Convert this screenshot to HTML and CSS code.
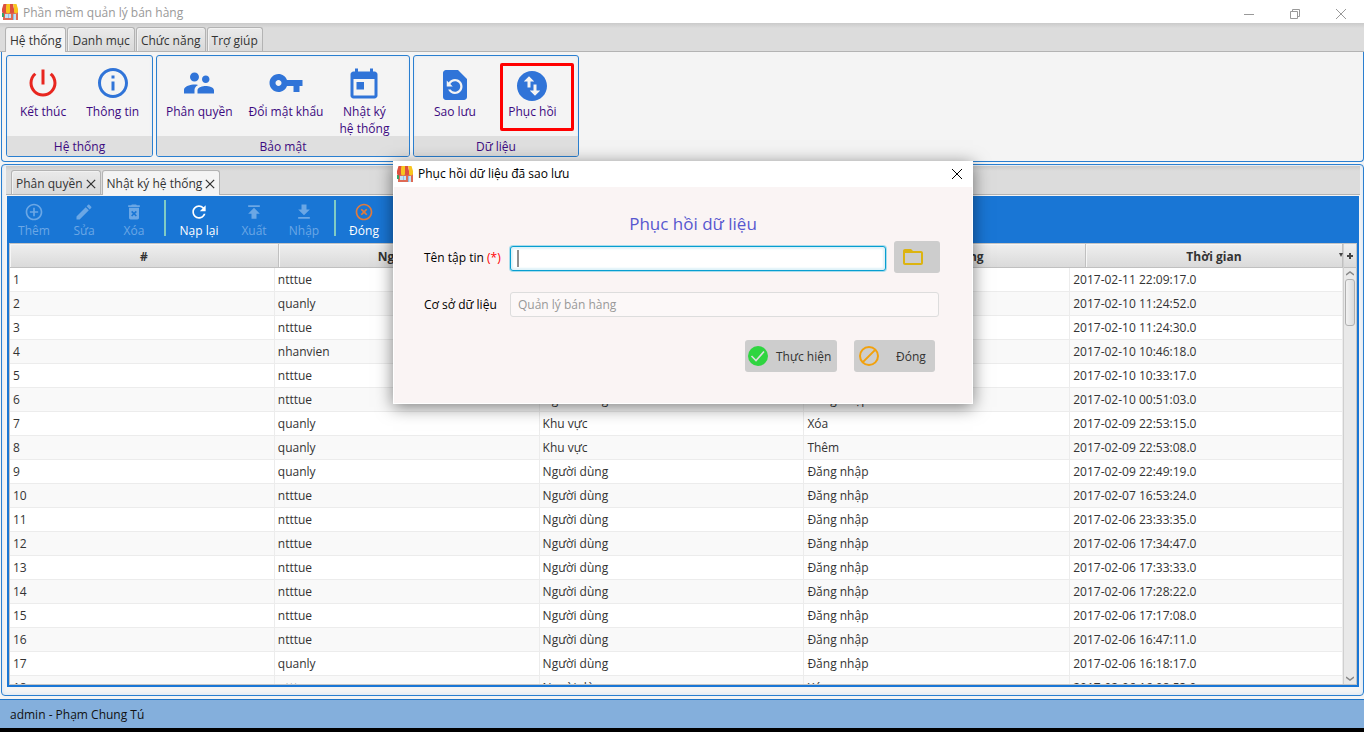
FILE: index.html
```html
<!DOCTYPE html>
<html lang="vi">
<head>
<meta charset="utf-8">
<title>Phần mềm quản lý bán hàng</title>
<link rel="stylesheet" href="styles.css">
</head>
<body>
<svg class="sprite" aria-hidden="true">
  <symbol id="shop" viewBox="0 0 16 16">
    <path fill="#de6a55" d="M1 7h15v9H1z"/>
    <path fill="#2fa56b" d="M0 9h2v4H0z"/>
    <path fill="#c3e2f5" d="M3 10h6v4H3zM11 10h3v6h-3z"/>
    <path fill="#8fc0e6" d="M6 10h1v4H6zM11 10h1v6h-1z"/>
    <path fill="#dc4f3f" d="M1.500 0H5l-1 7.500a2 2 0 0 1-4 0V5zM8 0h3l1 5v2.500a2 2 0 0 1-4 0z"/>
    <path fill="#f8c51e" d="M4.500 0H8v7.500a2 2 0 0 1-4 0V4zM11 0h3.500L16 5v2.500a2 2 0 0 1-4 0V4z"/>
  </symbol>
  <symbol id="close" viewBox="0 0 12 12"><path fill="none" stroke="currentColor" d="M1 1l10 10M11 1L1 11"/></symbol>
</svg>
<div class="app">
  <header class="titlebar">
    <svg class="shop"><use href="#shop"/></svg>
    <h1>Phần mềm quản lý bán hàng</h1>
    <div class="winctl">
      <button aria-label="Thu nhỏ"><svg viewBox="0 0 12 12"><path fill="none" stroke="currentColor" d="M1 6.500h10"/></svg></button>
      <button aria-label="Khôi phục"><svg viewBox="0 0 12 12"><path fill="none" stroke="currentColor" d="M1.500 3.500h7v7h-7zM3.500 3.500v-2h7v7h-2"/></svg></button>
      <button aria-label="Đóng cửa sổ"><svg viewBox="0 0 12 12"><use href="#close"/></svg></button>
    </div>
  </header>

  <nav class="tabs menu">
    <button class="tab active">Hệ thống</button>
    <button class="tab">Danh mục</button>
    <button class="tab">Chức năng</button>
    <button class="tab">Trợ giúp</button>
  </nav>

  <section class="ribbon">
    <div class="group g1">
      <div class="tools">
        <button class="tool"><svg class="red" viewBox="0 0 24 24"><path fill="currentColor" d="M13 3h-2v10h2V3zm4.830 2.170l-1.420 1.420C17.990 7.860 19 9.810 19 12c0 3.870-3.130 7-7 7s-7-3.130-7-7c0-2.190 1.010-4.140 2.580-5.420L6.170 5.170C4.230 6.820 3 9.260 3 12c0 4.970 4.030 9 9 9s9-4.030 9-9c0-2.740-1.230-5.180-3.170-6.830z"/></svg>Kết thúc</button>
        <button class="tool"><svg viewBox="0 0 24 24"><path fill="currentColor" d="M11 17h2v-6h-2v6zm1-15C6.480 2 2 6.480 2 12s4.480 10 10 10 10-4.480 10-10S17.520 2 12 2zm0 18c-4.410 0-8-3.590-8-8s3.590-8 8-8 8 3.590 8 8-3.590 8-8 8zM11 9h2V7h-2v2z"/></svg>Thông tin</button>
      </div>
      <h2>Hệ thống</h2>
    </div>
    <div class="group g2">
      <div class="tools">
        <button class="tool"><svg viewBox="0 0 24 24"><path fill="currentColor" d="M16.500 12c1.380 0 2.490-1.120 2.490-2.500S17.880 7 16.500 7C15.120 7 14 8.120 14 9.500s1.120 2.500 2.500 2.500zM9 11c1.660 0 2.990-1.340 2.990-3S10.660 5 9 5C7.340 5 6 6.340 6 8s1.340 3 3 3zm7.500 3c-1.830 0-5.500.920-5.500 2.750V19h11v-2.250c0-1.830-3.670-2.750-5.500-2.750zM9 13c-2.330 0-7 1.170-7 3.500V19h7v-2.250c0-.850.330-2.340 2.370-3.470C10.500 13.100 9.660 13 9 13z"/></svg>Phân quyền</button>
        <button class="tool"><svg viewBox="0 0 24 24"><path fill="currentColor" d="M12.650 10C11.830 7.670 9.610 6 7 6c-3.310 0-6 2.690-6 6s2.690 6 6 6c2.610 0 4.830-1.670 5.650-4H17v4h4v-4h2v-4H12.650zM7 14c-1.100 0-2-.9-2-2s.9-2 2-2 2 .9 2 2-.9 2-2 2z"/></svg>Đổi mật khẩu</button>
        <button class="tool low"><svg viewBox="0 0 24 24"><path fill="currentColor" d="M19 3h-1V1h-2v2H8V1H6v2H5c-1.110 0-1.990.9-1.990 2L3 19c0 1.100.890 2 2 2h14c1.100 0 2-.9 2-2V5c0-1.100-.9-2-2-2zm0 16H5V8h14v11zM7 10h5v5H7z"/></svg>Nhật ký<br>hệ thống</button>
      </div>
      <h2>Bảo mật</h2>
    </div>
    <div class="group g3">
      <div class="tools">
        <button class="tool low"><svg viewBox="0 0 24 24"><path fill="currentColor" d="M14 2H6c-1.100 0-1.990.9-1.990 2L4 20c0 1.100.890 2 1.990 2H18c1.100 0 2-.9 2-2V8l-6-6zm-2 16c-2.050 0-3.810-1.240-4.580-3h1.710c.630.9 1.680 1.500 2.870 1.500 1.930 0 3.500-1.570 3.500-3.500S13.930 9.500 12 9.500c-1.350 0-2.520.780-3.100 1.900l1.600 1.600h-4V9l1.300 1.300C8.690 8.920 10.230 8 12 8c2.760 0 5 2.240 5 5s-2.240 5-5 5z"/></svg>Sao lưu</button>
        <button class="tool marked"><svg viewBox="0 0 24 24"><path fill="currentColor" d="M12 2C6.480 2 2 6.480 2 12s4.480 10 10 10 10-4.480 10-10S17.520 2 12 2zM6.500 9L10 5.500 13.500 9H11v4H9V9H6.500zm11 6L14 18.500 10.500 15H13v-4h2v4h2.500z"/></svg>Phục hồi</button>
      </div>
      <h2>Dữ liệu</h2>
    </div>
  </section>

  <main class="workspace">
    <div class="tabs docs">
      <div class="tab">Phân quyền <button aria-label="Đóng Phân quyền"><svg><use href="#close"/></svg></button></div>
      <div class="tab active">Nhật ký hệ thống <button aria-label="Đóng Nhật ký hệ thống"><svg><use href="#close"/></svg></button></div>
    </div>
    <div class="panel">
      <div class="toolbar">
        <div class="acts">
          <button class="act" disabled><svg viewBox="0 0 24 24"><path fill="currentColor" d="M13 7h-2v4H7v2h4v4h2v-4h4v-2h-4V7zm-1-5C6.480 2 2 6.480 2 12s4.480 10 10 10 10-4.480 10-10S17.520 2 12 2zm0 18c-4.410 0-8-3.590-8-8s3.590-8 8-8 8 3.590 8 8-3.590 8-8 8z"/></svg>Thêm</button>
          <button class="act" disabled><svg viewBox="0 0 24 24"><path fill="currentColor" d="M3 17.250V21h3.750L17.810 9.940l-3.750-3.750L3 17.250zM20.710 7.040c.390-.390.390-1.020 0-1.410l-2.340-2.340c-.390-.390-1.020-.390-1.410 0l-1.830 1.830 3.750 3.750 1.830-1.830z"/></svg>Sửa</button>
          <button class="act" disabled><svg viewBox="0 0 24 24"><path fill="currentColor" fill-rule="evenodd" d="M6 7v12c0 1.100.9 2 2 2h8c1.100 0 2-.9 2-2V7zM15.500 4l-1-1h-5l-1 1H5v2h14V4zM8.500 11.900l1.400-1.400 2.100 2.100 2.100-2.100 1.400 1.400-2.100 2.100 2.100 2.100-1.400 1.400-2.100-2.100-2.100 2.100-1.400-1.400 2.100-2.100z"/></svg>Xóa</button>
        </div>
        <div class="acts">
          <button class="act wide"><svg viewBox="0 0 24 24"><path fill="currentColor" d="M17.650 6.350C16.200 4.900 14.210 4 12 4c-4.420 0-7.990 3.580-7.990 8s3.570 8 7.990 8c3.730 0 6.840-2.550 7.730-6h-2.080c-.820 2.330-3.040 4-5.650 4-3.310 0-6-2.690-6-6s2.690-6 6-6c1.660 0 3.140.690 4.220 1.780L13 11h7V4l-2.350 2.350z"/></svg>Nạp lại</button>
          <button class="act" disabled><svg viewBox="0 0 24 24"><path fill="currentColor" d="M5 4v2h14V4H5zm0 10h4v6h6v-6h4l-7-7-7 7z"/></svg>Xuất</button>
          <button class="act" disabled><svg viewBox="0 0 24 24"><path fill="currentColor" d="M19 9h-4V3H9v6H5l7 7 7-7zM5 18v2h14v-2H5z"/></svg>Nhập</button>
        </div>
        <div class="acts">
          <button class="act"><svg class="orange" viewBox="0 0 24 24"><path fill="currentColor" d="M14.590 8L12 10.590 9.410 8 8 9.410 10.590 12 8 14.590 9.410 16 12 13.410 14.590 16 16 14.590 13.410 12 16 9.410 14.590 8zM12 2C6.470 2 2 6.470 2 12s4.470 10 10 10 10-4.470 10-10S17.530 2 12 2zm0 18c-4.410 0-8-3.590-8-8s3.590-8 8-8 8 3.590 8 8-3.590 8-8 8z"/></svg>Đóng</button>
        </div>
      </div>
      <div class="grid">
        <table>
          <thead><tr><th>#</th><th>Người dùng</th><th>Chức năng</th><th>Hành động</th><th>Thời gian<svg class="sort" viewBox="0 0 4 4"><path fill="#444" d="M0 0h4L2 4z"/></svg></th></tr></thead>
          <tbody>
            <tr><td>1</td><td>ntttue</td><td>Người dùng</td><td>Đăng nhập</td><td>2017-02-11 22:09:17.0</td></tr>
            <tr><td>2</td><td>quanly</td><td>Người dùng</td><td>Đăng nhập</td><td>2017-02-10 11:24:52.0</td></tr>
            <tr><td>3</td><td>ntttue</td><td>Người dùng</td><td>Đăng nhập</td><td>2017-02-10 11:24:30.0</td></tr>
            <tr><td>4</td><td>nhanvien</td><td>Người dùng</td><td>Đăng nhập</td><td>2017-02-10 10:46:18.0</td></tr>
            <tr><td>5</td><td>ntttue</td><td>Người dùng</td><td>Đăng nhập</td><td>2017-02-10 10:33:17.0</td></tr>
            <tr><td>6</td><td>ntttue</td><td>Người dùng</td><td>Đăng nhập</td><td>2017-02-10 00:51:03.0</td></tr>
            <tr><td>7</td><td>quanly</td><td>Khu vực</td><td>Xóa</td><td>2017-02-09 22:53:15.0</td></tr>
            <tr><td>8</td><td>quanly</td><td>Khu vực</td><td>Thêm</td><td>2017-02-09 22:53:08.0</td></tr>
            <tr><td>9</td><td>quanly</td><td>Người dùng</td><td>Đăng nhập</td><td>2017-02-09 22:49:19.0</td></tr>
            <tr><td>10</td><td>ntttue</td><td>Người dùng</td><td>Đăng nhập</td><td>2017-02-07 16:53:24.0</td></tr>
            <tr><td>11</td><td>ntttue</td><td>Người dùng</td><td>Đăng nhập</td><td>2017-02-06 23:33:35.0</td></tr>
            <tr><td>12</td><td>ntttue</td><td>Người dùng</td><td>Đăng nhập</td><td>2017-02-06 17:34:47.0</td></tr>
            <tr><td>13</td><td>ntttue</td><td>Người dùng</td><td>Đăng nhập</td><td>2017-02-06 17:33:33.0</td></tr>
            <tr><td>14</td><td>ntttue</td><td>Người dùng</td><td>Đăng nhập</td><td>2017-02-06 17:28:22.0</td></tr>
            <tr><td>15</td><td>ntttue</td><td>Người dùng</td><td>Đăng nhập</td><td>2017-02-06 17:17:08.0</td></tr>
            <tr><td>16</td><td>ntttue</td><td>Người dùng</td><td>Đăng nhập</td><td>2017-02-06 16:47:11.0</td></tr>
            <tr><td>17</td><td>quanly</td><td>Người dùng</td><td>Đăng nhập</td><td>2017-02-06 16:18:17.0</td></tr>
            <tr><td>18</td><td>ntttue</td><td>Người dùng</td><td>Xóa</td><td>2017-02-06 16:08:53.0</td></tr>
          </tbody>
        </table>
        <div class="scroll">
          <button class="plus" aria-label="Chọn cột"><svg viewBox="0 0 8 8"><path fill="#444" d="M3 1h2v2h2v2H5v2H3V5H1V3h2z"/></svg></button>
          <button class="arrow" aria-label="Cuộn lên"><svg viewBox="0 0 8 6"><path fill="none" stroke="#888" stroke-width="1.500" d="M0 5l4-3 4 3"/></svg></button>
          <div class="thumb"></div>
          <button class="arrow" aria-label="Cuộn xuống"><svg viewBox="0 0 8 6"><path fill="none" stroke="#888" stroke-width="1.500" d="M0 1l4 3 4-3"/></svg></button>
        </div>
      </div>
    </div>
  </main>
  <footer class="status">admin - Phạm Chung Tú</footer>
</div>

<div class="dialog" role="dialog" aria-labelledby="dlg-title">
  <div class="dlg-bar">
    <svg class="shop"><use href="#shop"/></svg>
    <span id="dlg-title">Phục hồi dữ liệu đã sao lưu</span>
    <button aria-label="Đóng hộp thoại"><svg><use href="#close"/></svg></button>
  </div>
  <form class="dlg-body">
    <h2>Phục hồi dữ liệu</h2>
    <div class="field">
      <label for="file">Tên tập tin <b>(*)</b></label>
      <div class="focus"><span class="caret"></span><input id="file" type="text"></div>
      <button type="button" class="btn folder" aria-label="Chọn tập tin"><svg viewBox="0 0 24 24"><path fill="#dcb411" d="M20 6h-8l-2-2H4c-1.100 0-1.990.9-1.990 2L2 18c0 1.100.9 2 2 2h16c1.100 0 2-.9 2-2V8c0-1.100-.9-2-2-2zm0 12H4V8h16v10z"/></svg></button>
    </div>
    <div class="field">
      <label for="db">Cơ sở dữ liệu</label>
      <input id="db" type="text" value="Quản lý bán hàng" disabled>
    </div>
    <div class="buttons">
      <button type="button" class="btn run"><svg viewBox="0 0 24 24"><circle cx="12" cy="12" r="10" fill="#2fd540"/><path fill="none" stroke="#ddd" stroke-width="1.600" d="M5.500 12l4.500 4.500 8-9"/></svg><span>Thực hiện</span></button>
      <button type="button" class="btn stop"><svg viewBox="0 0 24 24"><path fill="none" stroke="#f2a10c" stroke-width="2" d="M18.400 5.600L5.600 18.400M21 12a9 9 0 1 1-18 0 9 9 0 0 1 18 0z"/></svg><span>Đóng</span></button>
    </div>
  </form>
</div>
</body>
</html>
```
FILE: styles.css
```css
* { box-sizing: border-box; }
html, body { height: 100%; }
body {
  margin: 0;
  overflow: hidden;
  font: 12px/16px "Open Sans", "Noto Sans", sans-serif;
  color: #333;
  background: #000;
}
button { font: inherit; color: inherit; margin: 0; padding: 0; border: 0; background: none; }
h1, h2 { margin: 0; font: inherit; }
.sprite { position: absolute; width: 0; height: 0; }
.shop { width: 16px; height: 16px; flex: none; }

.app { height: 100%; display: flex; flex-direction: column; background: #f4f4f4; border-bottom: 4px solid #000; }

.titlebar { display: flex; align-items: center; gap: 5px; height: 23px; padding-left: 2px; background: #fff; color: #999; flex: none; }
.titlebar h1 { padding-top: 2px; }
.winctl { margin-left: auto; display: flex; padding-top: 4px; }
.winctl button { width: 46px; height: 18px; display: grid; place-items: center; }
.winctl svg { width: 12px; height: 12px; }

.tabs { display: flex; align-items: flex-end; height: 29px; flex: none; background: linear-gradient(#cacaca, #dcdcdc 5px); border-bottom: 1px solid #b3b3b3; }
.menu { padding-left: 5px; gap: 1px; }
.tab { height: 24px; padding: 2px 4px 0; display: flex; align-items: center; gap: 3px; border: 1px solid #b3b3b3; border-bottom: 0; border-radius: 3px 3px 0 0; background: linear-gradient(#eaeaea, #d9d9d9); box-shadow: inset 1px 1px #f2f2f2; white-space: nowrap; }
.tab.active { background: #f4f4f4; margin-bottom: -1px; height: 25px; }
.tab button { width: 10px; height: 10px; display: flex; }
.tab svg { width: 10px; height: 10px; stroke-width: 1.5; }

.ribbon { display: flex; gap: 3px; height: 110px; flex: none; margin: 0 0 0 1px; padding: 3px 4px 4px; border: 1px solid #2a7fd0; border-top: 0; border-radius: 0 0 4px 4px; }
.group { display: flex; flex-direction: column; border: 1px solid #2a7fd0; border-radius: 3px; color: #3c0a80; overflow: hidden; box-shadow: inset 0 0 3px #dbe6f2; }
.g1 { width: 147px; }
.g2 { width: 254px; }
.g3 { width: 166px; }
.group h2 { height: 20px; line-height: 22px; background: #dfdfdf; text-align: center; }
.tools { flex: 1; min-height: 0; display: flex; align-items: flex-start; padding-top: 9px; }
.g1 .tools { gap: 20px; padding-left: 13px; }
.g2 .tools { gap: 16px; padding-left: 9px; }
.g3 .tools { gap: 24px; padding-left: 20px; }
.tool { display: flex; flex-direction: column; align-items: center; line-height: 17px; white-space: nowrap; }
.tool svg { width: 36px; height: 36px; margin-bottom: 2px; color: #3074d8; }
.tool svg.red { color: #e8261f; }
.low svg { margin-top: 2px; margin-bottom: 0; }
.marked { width: 74px; height: 68px; margin-top: -2px; padding: 2px 9px 0 0; border: 3px solid #f00; border-radius: 2px; }
.marked svg { margin-bottom: -1px; }

.workspace { flex: 1; min-height: 0; display: flex; flex-direction: column; margin: 2px 0 3px 1px; padding: 1px 3px 8px 4px; border: 1px solid #2a7fd0; border-radius: 4px; box-shadow: inset 0 0 4px #cfe0f2; }
.docs { padding-left: 5px; gap: 1px; }
.panel { flex: 1; min-height: 0; display: flex; flex-direction: column; margin: 0 1px; padding: 0 2px 2px; background: #1976d5; border-top: 1px solid #f4f4f4; }
.toolbar { height: 47px; display: flex; flex: none; padding: 4px 0 7px; }
.acts { display: flex; padding-right: 5px; }
.acts + .acts { padding-left: 8px; border-left: 2px solid #80cbc4; }
.acts:last-child { padding-left: 3px; }
.act { width: 50px; display: flex; flex-direction: column; align-items: center; color: #fff; padding-top: 2px; }
.act.wide { width: 55px; padding-right: 5px; }
.act:disabled { color: #6ba7e5; }
.act svg { width: 20px; height: 20px; margin-bottom: 1px; flex: none; }
.act .orange { color: #e07b3c; }

.grid { flex: 1; min-height: 0; display: flex; overflow: hidden; border: 1px solid #c4c4c4; background: #fff; }
table { flex: 1; min-width: 0; display: block; }
thead, tbody { display: block; }
tr { display: grid; }
thead tr { grid-template-columns: 269fr 269fr 269fr 269fr 257fr; height: 24px; }
th { position: relative; line-height: 25px; height: 24px; padding: 0; background: linear-gradient(#efefef, #dadada); border-right: 1px solid #c0c0c0; border-bottom: 1px solid #c0c0c0; box-shadow: inset 1px 1px #f6f6f6; font-weight: bold; }
.sort { position: absolute; right: -1px; top: 9px; width: 4px; height: 4px; }
tbody tr { grid-template-columns: 265fr 265fr 265fr 266fr 273fr; height: 24px; background: #fff; }
tbody tr:nth-child(even) { background: #f9f9f9; }
td { padding: 0 3px; line-height: 23px; border-right: 1px solid #ececec; border-bottom: 1px solid #ececec; }
.scroll { width: 13px; flex: none; display: flex; flex-direction: column; background: #e9e9e9; border-left: 1px solid #cfcfcf; }
.plus { height: 24px; background: linear-gradient(#efefef, #dadada); border-bottom: 1px solid #c0c0c0; display: grid; place-items: center; }
.plus svg { width: 8px; height: 8px; }
.arrow { height: 10px; display: grid; place-items: center; }
.arrow svg { width: 8px; height: 6px; }
.thumb { height: 47px; margin: 1px 1px auto; border: 1px solid #b0b0b0; border-radius: 3px; background: linear-gradient(90deg, #f2f2f2, #dcdcdc); }

.status { height: 29px; flex: none; padding-left: 10px; line-height: 30px; border-top: 1px solid #1f75c8; background: #84afdc; color: #111; }

.dialog { position: absolute; left: calc(50% - 289px); top: 161px; width: 580px; background: #faf4f4; border: 1px solid #fff; box-shadow: 0 3px 16px rgba(0, 0, 0, .5); color: #000; }
.dlg-bar { display: flex; align-items: center; gap: 5px; height: 25px; padding: 0 9px 2px 3px; background: #fff; }
.dlg-bar button { margin-left: auto; display: flex; }
.dlg-bar button svg { width: 12px; height: 12px; }
.dlg-body { padding: 25px 33px 31px 30px; }
.dlg-body h2 { padding-left: 23px; text-align: center; font-size: 17px; line-height: 24px; color: #5757cf; }
.field { display: flex; align-items: center; height: 32px; margin-top: 5px; }
.field + .field { margin-top: 15px; }
.field label { width: 86px; flex: none; padding-top: 2px; }
.field b { color: #f00; font-weight: normal; }
.field input { flex: 1; min-width: 0; height: 25px; padding: 0 7px; font: inherit; border: 1px solid #ddd; border-radius: 3px; background: #fcf8f8; color: #999; outline: 0; }
.focus { flex: 1; display: flex; position: relative; padding-top: 2px; }
.field .focus input { border: 1px solid #079ed0; box-shadow: 0 0 0 1px #a9dcec, inset 0 0 2px 2px #dff2f8; background: #fff; color: #333; }
.caret { position: absolute; left: 7px; top: 6px; width: 2px; height: 17px; background: #909090; }
.btn { height: 32px; display: flex; align-items: center; background: #cdcdcd; border-radius: 3px; color: #333; }
.btn svg { width: 24px; height: 24px; flex: none; }
.btn span { padding-top: 2px; }
.folder { width: 46px; margin: 0 -1px 0 8px; padding-left: 7px; }
.buttons { display: flex; justify-content: flex-end; gap: 17px; margin: 20px 4px 0 0; }
.run { width: 92px; padding-left: 1px; gap: 6px; }
.stop { width: 81px; padding-left: 3px; gap: 15px; }
```
